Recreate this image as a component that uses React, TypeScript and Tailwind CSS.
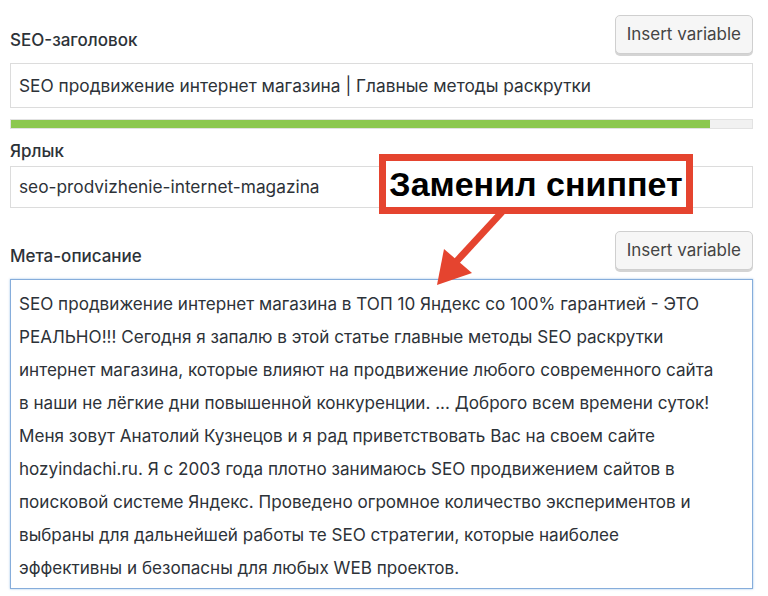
import React from "react";

const metaLines = [
  "SEO продвижение интернет магазина в ТОП 10 Яндекс со 100% гарантией - ЭТО",
  "РЕАЛЬНО!!! Сегодня я запалю в этой статье главные методы SEO раскрутки",
  "интернет магазина, которые влияют на продвижение любого современного сайта",
  "в наши не лёгкие дни повышенной конкуренции. ... Доброго всем времени суток!",
  "Меня зовут Анатолий Кузнецов и я рад приветствовать Вас на своем сайте",
  "hozyindachi.ru. Я с 2003 года плотно занимаюсь SEO продвижением сайтов в",
  "поисковой системе Яндекс. Проведено огромное количество экспериментов и",
  "выбраны для дальнейшей работы те SEO стратегии, которые наиболее",
  "эффективны и безопасны для любых WEB проектов.",
];

function InsertButton() {
  return (
    <button className="h-[39px] px-[11px] rounded-[5px] border border-[#cfcfcf] bg-[#f6f6f6] text-[17px] text-[#444] shadow-[0_2px_0_#d4d4d4]">
      Insert variable
    </button>
  );
}

export default function App() {
  return (
    <div
      className="relative w-[768px] h-[596px] bg-white overflow-hidden text-[#2d3238]"
      style={{ fontFamily: "Inter, 'Noto Sans', sans-serif" }}
    >
      <div className="pl-[10px] pr-[15px] pt-[15px]">
        {/* SEO-заголовок */}
        <div className="flex items-end justify-between">
          <label className="text-[17px] font-medium pb-[1px]">SEO-заголовок</label>
          <InsertButton />
        </div>
        <div className="mt-[9px] h-[45px] border border-[#dcdcdc] flex items-center pl-[8px] text-[17.3px]">
          SEO продвижение интернет магазина | Главные методы раскрутки
        </div>
        <div className="mt-[11px] h-[10px] border border-[#e2e2e2] bg-[#f1f1f1]">
          <div className="h-full w-[94.3%] bg-[#8cc84f]" />
        </div>

        {/* Ярлык */}
        <label className="block mt-[9px] text-[17px] font-medium leading-[26px]">Ярлык</label>
        <div className="mt-[2px] h-[42px] border border-[#dcdcdc] flex items-center pl-[8px] text-[17.3px]">
          seo-prodvizhenie-internet-magazina
        </div>

        {/* Мета-описание */}
        <div className="mt-[23px] flex items-end justify-between">
          <label className="text-[17px] font-medium pb-[1px]">Мета-описание</label>
          <InsertButton />
        </div>
        <div className="mt-[9px] h-[310px] border border-[#86addb] shadow-[0_0_2px_rgba(91,157,217,0.6)] pl-[8px] pt-[7px] text-[17.1px] leading-[33px]">
          {metaLines.map((l, i) => (
            <div key={i} className="whitespace-nowrap">
              {l}
            </div>
          ))}
        </div>
      </div>

      {/* annotation */}
      <div className="absolute left-[379px] top-[154px] w-[314px] h-[60px] border-[7px] border-[#e5442f] bg-white flex items-center justify-center">
        <span
          className="text-[34px] font-bold text-black leading-none"
          style={{ fontFamily: "'Liberation Sans', Arial, sans-serif" }}
        >
          Заменил сниппет
        </span>
      </div>
      <svg className="absolute left-0 top-0" width="768" height="596" viewBox="0 0 768 596">
        <line x1="502" y1="212" x2="455" y2="263" stroke="#e5442f" strokeWidth="7" />
        <polygon points="437,285 444,249 472,273" fill="#e5442f" />
      </svg>
    </div>
  );
}
